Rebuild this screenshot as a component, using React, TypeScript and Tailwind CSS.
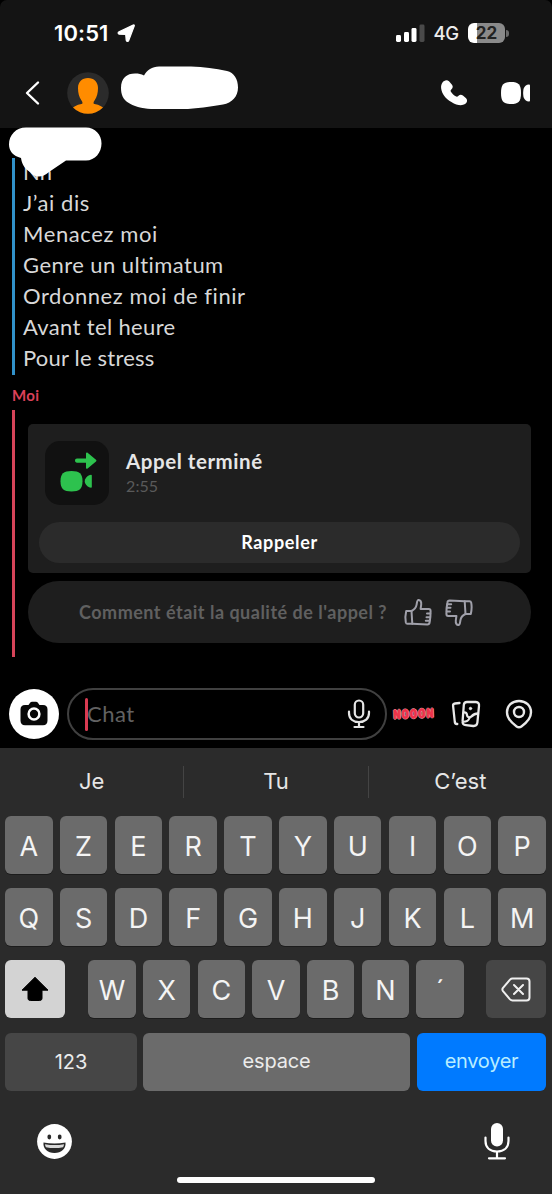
import React from "react";

const messages = [
  { text: "Nn", track: "tracking-[0px]" },
  { text: "J’ai dis", track: "tracking-[0.55px]" },
  { text: "Menacez moi", track: "tracking-[0.6px]" },
  { text: "Genre un ultimatum", track: "tracking-[0.45px]" },
  { text: "Ordonnez moi de finir", track: "tracking-[0.55px]" },
  { text: "Avant tel heure", track: "tracking-[0.35px]" },
  { text: "Pour le stress", track: "tracking-[0.2px]" },
];

function StatusBar() {
  return (
    <div className="flex h-[66px] items-center pl-[54px] pr-[43px] text-white">
      <span className="w-[58px] whitespace-nowrap text-[22px] font-semibold leading-none tracking-[0.1px]">10:51</span>
      <svg className="ml-[5px]" width="19" height="19" viewBox="0 0 19 19">
        <path d="M17.300 1.700 11.700 16.500C11.200 17.800 9.400 17.600 9.200 16.200L8.700 10.500 2.300 10.200C.9 10 .7 8.500 2 7.900L16.200 1.100C16.900 .8 17.500 1 17.300 1.700Z" fill="#fff" stroke="#fff" strokeWidth="1.200" strokeLinejoin="round" />
      </svg>
      <div className="ml-auto flex items-center">
        <svg width="29" height="19" viewBox="0 0 29 19">
          <rect x="0" y="11" width="5" height="7" rx="1.4" fill="#fff" />
          <rect x="8" y="8" width="5" height="10" rx="1.4" fill="#fff" />
          <rect x="15.500" y="4" width="5" height="14" rx="1.4" fill="#fff" />
          <rect x="23.500" y="0.500" width="5" height="17.500" rx="1.4" fill="#4a4a4a" />
        </svg>
        <span className="ml-[8px] text-[18.500px] font-medium leading-none tracking-[-0.2px] text-[#ececec]">4G</span>
        <div className="ml-[9px] flex h-[20px] w-[37px] items-center justify-center overflow-hidden rounded-[6px] bg-[linear-gradient(90deg,#fff_9px,#8a8a8a_9px)]">
          <span className="text-[17px] font-bold leading-none text-[#222]">22</span>
        </div>
        <div className="ml-px h-[7px] w-[3px] rounded-r-full bg-[#6b6b6b]" />
      </div>
    </div>
  );
}

function ChatHeader() {
  return (
    <div className="flex h-[62px] items-center pl-[24px] pr-[21px] pb-[8px]">
      <svg width="17" height="26" viewBox="0 0 17 26" fill="none" stroke="#fff" strokeWidth="2.400" strokeLinecap="round" strokeLinejoin="round">
        <path d="M14 2.500 3 13l11 10.500" />
      </svg>
      <svg className="ml-[26px]" width="42" height="42" viewBox="0 0 42 42">
        <defs>
          <clipPath id="avatar"><circle cx="21" cy="21" r="20.800" /></clipPath>
        </defs>
        <circle cx="21" cy="21" r="20.800" fill="#2b2b2b" />
        <g clipPath="url(#avatar)" fill="#ff8c00">
          <path d="M21 6c6 0 10 4 10 10 0 5-1 9-3.500 12.500-.6.900-1 1.500-1 2.500 0 .6.400.9 1 1 5 .8 8.500 3 11.500 6V42H3v-4c3-3 6.500-5.200 11.500-6 .6-.1 1-.4 1-1 0-1-.4-1.600-1-2.500C12 25 11 21 11 16 11 10 15 6 21 6z" />
        </g>
      </svg>
      <svg className="ml-[11px] mb-[10px]" width="120" height="44" viewBox="0 0 120 44">
        <path d="M1 22C1 12 7 7.500 15 7.500c4 0 6 .500 9 2C27 4 32 .500 39 .500h32c13 .500 24 2 36 4.500 7 1.500 11 8 11 16.500 0 9-6 15.500-15 17-12 2-27 4.500-40 4.500H31c-9-.500-18-3-23-6.500C3 33.500 1 28 1 22z" fill="#fff" />
      </svg>
      <svg className="ml-auto" width="28" height="28" viewBox="0 0 28 28">
        <path d="M2.500 3.500C4 1.300 7 .3 9 2.300l3 3.500c1.200 1.500.9 3.100-.5 4.400-1 .9-1.200 1.600-.4 2.800 1.200 1.800 2.800 3.200 4.600 4.300 1.100.7 1.900.4 2.800-.5 1.300-1.300 3-1.400 4.400-.2l3.200 2.700c1.700 1.600 1.200 4.500-1 5.800-3 1.800-8.400 1.400-13.700-2.100C5.500 19.700 1.900 14.500 1.200 9.700.8 7 1.400 5 2.500 3.500z" fill="#fff" />
      </svg>
      <svg className="ml-[32px]" width="31" height="24" viewBox="0 0 31 24">
        <path d="M11 1c7.500 0 10 2.500 10 11s-2.500 11-10 11S1 20.500 1 12 3.500 1 11 1z" fill="#fff" />
        <path d="M23.500 8c.7-2.700 3-4.500 5.300-4.500.8 0 1.200.4 1.200 1.200v14.600c0 .8-.4 1.200-1.200 1.200-2.300 0-4.600-1.800-5.300-4.500-.5-2.500-.5-5.500 0-8z" fill="#fff" />
      </svg>
    </div>
  );
}

function Thumb() {
  return (
    <svg width="29" height="29" viewBox="0 0 29 29" fill="none" stroke="#a0a0aa" strokeWidth="2" strokeLinecap="round" strokeLinejoin="round">
      <path d="M3.200 13h5.300L9.300 25.800H4.500c-.9 0-1.500-.5-1.700-1.400-.6-3.300-.5-7.700.4-11.400z" />
      <path d="M8.500 13c3-1.300 4.600-3.300 5.100-6.300.3-1.900.5-4.400 1.700-4.700 2-.4 3.200 1.900 2.900 4.500l-.6 4.500h8.200c1.400 0 1.800 1 1.800 2.200 0 4-.2 7.500-1 11.300-.2 1.200-1 1.900-2.200 1.900L9.300 25.800" />
      <path d="M24 15.500h3.200M23.500 19.200h3.400M22.800 22.800h3.700" />
    </svg>
  );
}

function Conversation() {
  return (
    <main className="relative h-[552px] bg-black pt-[30px] pl-[12px] pr-[21px] font-[Lato,sans-serif]">
      <div className="flex h-[217px] border-l-[3px] border-[#3191c9]">
        <ul className="-mt-[2px] pl-[8px]">
          {messages.map((m) => (
            <li key={m.text} className={"h-[31px] whitespace-nowrap text-[22px] leading-[31px] text-[#d8d8d8] " + m.track}>{m.text}</li>
          ))}
        </ul>
      </div>
      <div className="h-[35px] pt-[10px] text-[15px] font-bold leading-[20px] tracking-[0.4px] text-[#dc4059]">Moi</div>
      <div className="h-[247px] border-l-[3px] border-[#d64459] pl-[13px] pt-[14px]">
        <section className="flex h-[149px] flex-col rounded-[5px] bg-[#1e1e1e] px-[11px] pt-[17px] pb-[10px]">
          <div className="flex">
            <div className="ml-[6px] h-[64px] w-[64px] rounded-[15px] bg-[#111]">
              <svg width="64" height="64" viewBox="0 0 64 64" fill="#2dc24e">
                <path d="M32 17.500h9v-5c0-1 .8-1.400 1.600-.8l8.400 7.100c.6.500.6 1.100 0 1.600l-8.400 7.100c-.8.600-1.600.2-1.600-.8v-5h-9c-1.200 0-2-.8-2-2.100s.8-2.100 2-2.100z" />
                <path d="M26.500 30c8 0 11 2.700 11 10.200s-3 10.200-11 10.200-11-2.700-11-10.200S18.500 30 26.500 30z" />
                <path d="M40 38.500c1.200-2.700 3.300-4.300 6-4.800.6 0 .8.300.8.800v11.400c0 .5-.2.800-.8.800-2.700-.5-4.800-2.100-6-4.800-.4-1-.4-2.400 0-3.400z" />
              </svg>
            </div>
            <div className="ml-[17px] pt-[7px]">
              <div className="whitespace-nowrap text-[20.500px] font-bold leading-[27px] tracking-[0.55px] text-[#e6e6e6]">Appel terminé</div>
              <div className="text-[16px] leading-[21px] tracking-[0.1px] text-[#5a5a5a]">2:55</div>
            </div>
          </div>
          <button className="mt-auto h-[41px] rounded-full bg-[#2b2b2b] text-[18px] font-bold leading-[41px] tracking-[0.65px] text-white">Rappeler</button>
        </section>
        <section className="mt-[8px] flex h-[62px] items-center rounded-[31px] bg-[#1e1e1e] pl-[51px] text-[#606060]">
          <span className="w-[310px] whitespace-nowrap text-[18px] font-bold tracking-[0.5px]">Comment était la qualité de l'appel ?</span>
          <div className="ml-[14px] flex gap-[13px]">
            <Thumb />
            <div className="mt-[-2px] rotate-180"><Thumb /></div>
          </div>
        </section>
      </div>
      <svg className="absolute left-[8px] top-[-1px]" width="94" height="52" viewBox="0 0 94 52">
        <path d="M18 .5h60c9 0 15.500 7 15.500 16S87 33.500 78 33.500H58L41 45c-7 6-14 6-19 0-6-4-8-8-9-14C5 29 1 24 1 17.500 1 8 8 .5 18 .5z" fill="#fff" />
      </svg>
    </main>
  );
}

function Composer() {
  return (
    <div className="flex h-[68px] items-center bg-black pl-[9px] pr-[19px]">
      <div className="flex h-[50px] w-[50px] items-center justify-center rounded-full bg-white">
        <svg width="28" height="26" viewBox="0 0 28 26">
          <path d="M5 4h3.500L10.300 1.500c.4-.6 1-.8 1.700-.8h4c.7 0 1.300.2 1.700.8L19.500 4H23c3 0 4.500 1.500 4.500 4.500v11c0 3-1.500 4.700-4.500 4.700H5c-3 0-4.500-1.700-4.500-4.700v-11C.5 5.500 2 4 5 4z" fill="#080808" />
          <circle cx="14" cy="13" r="5.400" fill="none" stroke="#fff" strokeWidth="2.500" />
        </svg>
      </div>
      <div className="ml-[8px] flex h-[52px] w-[320px] items-center rounded-full border-2 border-[#404040] pl-[16px] pr-[14px]">
        <span className="h-[33px] w-[3px] rounded-full bg-[#d93b52]" />
        <span className="-ml-px -mt-[2px] font-[Lato,sans-serif] text-[22px] tracking-[0.5px] text-[#626262]">Chat</span>
        <svg className="ml-auto" width="24" height="30" viewBox="0 0 24 30" fill="none" stroke="#e4e4e4" strokeWidth="2.200" strokeLinecap="round">
          <rect x="7.800" y="1.500" width="8.400" height="17" rx="4.200" />
          <path d="M2 12.500v1.500c0 5.500 4 9 10 9s10-3.500 10-9v-1.500M12 23v5M7.500 28h9" />
        </svg>
      </div>
      <span className="ml-[6px] w-[42px] -rotate-[2deg] whitespace-nowrap text-center font-['DejaVu_Sans_Mono',monospace] text-[12px] font-bold leading-none tracking-[1px] text-[#ee3049] [-webkit-text-stroke:0.8px_#ee3049] [text-shadow:1px_0_#d9a0a8,-1px_0_#d9a0a8,0_1px_#d9a0a8,0_-1px_#d9a0a8]">NOOON</span>
      <svg className="ml-[16px]" width="30" height="28" viewBox="0 0 30 28" fill="none" stroke="#e8e8e8" strokeWidth="2.300" strokeLinecap="round" strokeLinejoin="round">
        <path d="M8.500 3 4 3.500C2.500 3.700 1.900 4.500 2.100 6l1.700 16c.2 1.400 1 2.200 2.500 2" />
        <path d="M16 2h8.800c2.600.3 3.500 1.600 3.200 4l-1.600 16.500c-.3 2.700-1.700 3.700-4.200 3.500l-7.300-.8c-2.500-.3-3.600-1.600-3.300-4L12.800 5c.2-2 1.200-3 3.200-3z" />
        <path d="M12.800 12.500c2-.3 3 .7 3.200 2.700.3 2.600 2.600 2.900 4.500 1.200 1.800-1.900 3.500-2.900 6.500-2.900" />
        <path d="M12.300 21.800c3.300-.1 5.300-1.300 6.300-4" strokeWidth="1.900" />
        <circle cx="19.500" cy="8.500" r="1.200" fill="#e8e8e8" strokeWidth="1" />
      </svg>
      <svg className="ml-[24px]" width="28" height="30" viewBox="0 0 28 30" fill="none" stroke="#e8e8e8" strokeWidth="2.400" strokeLinejoin="round">
        <path d="M14 2c7 0 12 4.700 12 11.300 0 6.200-4 10.200-9.600 14.100-1.600 1.100-3.200 1.100-4.800 0C6 23.500 2 19.500 2 13.300 2 6.700 7 2 14 2z" />
        <circle cx="14" cy="13" r="5" />
      </svg>
    </div>
  );
}

function Key({ label }: { label: string }) {
  return <button className="h-[58px] w-[47.500px] shrink-0 rounded-[6px] bg-[#6b6b6b] pt-[2px] text-[27px] font-normal leading-none text-[#f4f4f4] shadow-[0_1px_0_#1c1c1c]">{label}</button>;
}

function Keyboard() {
  return (
    <div className="h-[446px] bg-[#2b2b2b] pl-[5px] pr-[6px]">
      <div className="-ml-[5px] -mr-[6px] flex h-[68px] items-center pb-px text-[22px] text-[#e6e6e6]">
        <span className="flex-1 text-center">Je</span>
        <span className="h-[32px] w-px bg-[#444]" />
        <span className="flex-1 text-center">Tu</span>
        <span className="h-[32px] w-px bg-[#444]" />
        <span className="flex-1 text-center">C’est</span>
      </div>
      <div className="flex flex-col gap-[14.200px]">
        <div className="flex justify-between">{"AZERTYUIOP".split("").map((k) => <Key key={k} label={k} />)}</div>
        <div className="flex justify-between">{"QSDFGHJKLM".split("").map((k) => <Key key={k} label={k} />)}</div>
        <div className="flex justify-between">
          <button className="flex h-[58px] w-[60px] items-center justify-center rounded-[6px] bg-[#d3d3d3]">
            <svg width="28" height="26" viewBox="0 0 28 26" fill="#000">
              <path d="M14 1.300 27 14.200H21V22c0 1.700-.7 2.500-2.300 2.500H9.300C7.700 24.500 7 23.700 7 22v-7.800H1z" stroke="#000" strokeLinejoin="round" />
            </svg>
          </button>
          <div className="ml-px flex gap-[7.200px]">{["W", "X", "C", "V", "B", "N", "´"].map((k) => <Key key={k} label={k} />)}</div>
          <button className="flex h-[58px] w-[60px] items-center justify-center rounded-[6px] bg-[#464646]">
            <svg width="30" height="25" viewBox="0 0 30 25" fill="none" stroke="#f0f0f0" strokeWidth="2" strokeLinecap="round" strokeLinejoin="round">
              <path d="M11.500 1.500H25.500c2 0 3 1 3 3v16c0 2-1 3-3 3H11.500c-1 0-1.800-.4-2.500-1.100l-7-8.300c-.7-.9-.7-2.300 0-3.200L9 2.600c.7-.7 1.500-1.100 2.500-1.100zM13 8l9 9M22 8l-9 9" />
            </svg>
          </button>
        </div>
        <div className="flex text-[20px] text-[#ececec]">
          <button className="h-[58px] w-[132px] rounded-[6px] bg-[#464646]">123</button>
          <button className="ml-[6px] h-[58px] w-[267px] rounded-[6px] bg-[#6b6b6b] pb-[2px] tracking-[-0.2px]">espace</button>
          <button className="ml-[7px] h-[58px] w-[129px] rounded-[6px] bg-[#007aff] pb-[2px] tracking-[-0.3px] text-[#b8edff]">envoyer</button>
        </div>
      </div>
      <div className="flex h-[86px] items-center justify-between pl-[32px] pr-[36px] pt-[15px]">
        <svg width="35" height="35" viewBox="0 0 35 35">
          <circle cx="17.500" cy="17.500" r="17.400" fill="#fff" />
          <ellipse cx="12.300" cy="13" rx="1.900" ry="2.400" fill="#292929" />
          <ellipse cx="22.700" cy="13" rx="1.900" ry="2.400" fill="#292929" />
          <path d="M6.500 18.500c7 1.200 15 1.200 22 0 .7 6-4 10.500-11 10.500S5.800 24.500 6.500 18.500z" fill="#292929" />
          <path d="M8 20.200c6.500 1.200 12.500 1.200 19 0-.1 1.300-.4 2.200-1 3-5.500 1.200-11.500 1.200-17 0-.6-.8-.9-1.700-1-3z" fill="#d8d8d8" />
        </svg>
        <svg width="26" height="38" viewBox="0 0 26 38" fill="none" stroke="#fff" strokeWidth="2.200" strokeLinecap="round">
          <rect x="7" y="1" width="12" height="23.500" rx="6" fill="#fff" stroke="none" />
          <path d="M1.500 15.500v3.500c0 6.500 4.500 10.500 11.500 10.500S24.500 25.500 24.500 19v-3.500M13 29.500V36M5 36.300h16" />
        </svg>
      </div>
      <div className="ml-[172px] h-[6px] w-[198px] rounded-full bg-white" />
    </div>
  );
}

export default function App() {
  return (
    <div className="h-[1194px] w-[552px] overflow-hidden bg-black font-[Inter,sans-serif]">
      <header className="h-[128px] rounded-t-[7px] bg-[#141414]">
        <StatusBar />
        <ChatHeader />
      </header>
      <Conversation />
      <Composer />
      <Keyboard />
    </div>
  );
}
